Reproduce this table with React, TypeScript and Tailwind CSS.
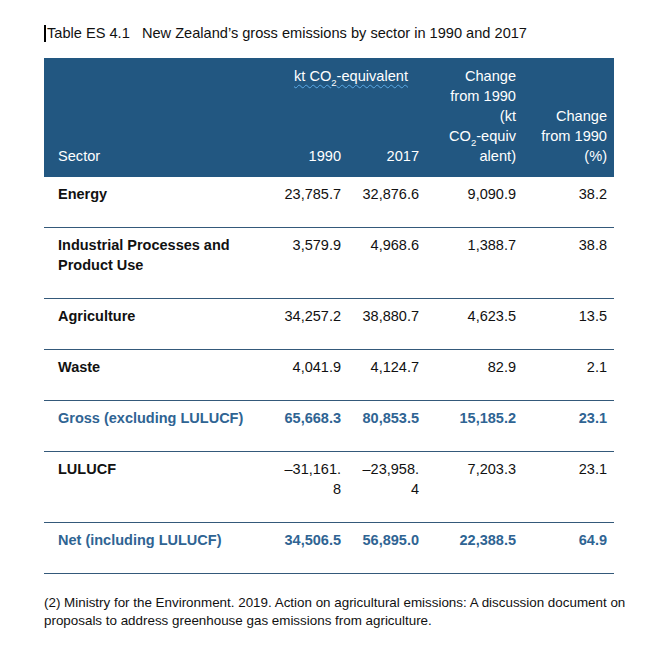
import React from "react";

const cols = "grid grid-cols-[206px_98px_78px_97px_91px]";

type Row = {
  sector: React.ReactNode;
  v1: React.ReactNode;
  v2: React.ReactNode;
  ch: string;
  pct: string;
  total?: boolean;
};

const rows: Row[] = [
  { sector: "Energy", v1: "23,785.7", v2: "32,876.6", ch: "9,090.9", pct: "38.2" },
  {
    sector: (
      <>
        Industrial Processes and
        <br />
        Product Use
      </>
    ),
    v1: "3,579.9",
    v2: "4,968.6",
    ch: "1,388.7",
    pct: "38.8",
  },
  { sector: "Agriculture", v1: "34,257.2", v2: "38,880.7", ch: "4,623.5", pct: "13.5" },
  { sector: "Waste", v1: "4,041.9", v2: "4,124.7", ch: "82.9", pct: "2.1" },
  { sector: "Gross (excluding LULUCF)", v1: "65,668.3", v2: "80,853.5", ch: "15,185.2", pct: "23.1", total: true },
  {
    sector: "LULUCF",
    v1: (
      <>
        –31,161.
        <br />8
      </>
    ),
    v2: (
      <>
        –23,958.
        <br />4
      </>
    ),
    ch: "7,203.3",
    pct: "23.1",
  },
  { sector: "Net (including LULUCF)", v1: "34,506.5", v2: "56,895.0", ch: "22,388.5", pct: "64.9", total: true },
];

export default function App() {
  return (
    <div
      className="w-[667px] h-[645px] bg-white text-[#111] overflow-hidden"
      style={{ fontFamily: '"Liberation Sans", Arial, sans-serif' }}
    >
      <div className="pl-[44px] pt-[24px]">
        <div className="flex items-center h-[18px]">
          <span className="w-[2px] h-[17px] bg-black mr-[1px]" />
          <span className="text-[14.6px] leading-[18px] whitespace-pre">
            {"Table ES 4.1   New Zealand’s gross emissions by sector in 1990 and 2017"}
          </span>
        </div>

        <div className="mt-[16px] w-[570px]">
          {/* header */}
          <div className={`${cols} bg-[#225781] text-white text-[14.6px] leading-[20px] pt-[8px] pb-[11px] h-[119px]`}>
            <div className="flex items-end pl-[14px]">Sector</div>
            <div className="col-span-2 flex flex-col justify-between">
              <div className="pl-[44px]">
                <span className="underline decoration-wavy decoration-[#5aa9e6] decoration-[1px] underline-offset-[3px]">
                  kt CO<sub className="text-[9.5px] leading-none align-[-3px]">2</sub>-equivalent
                </span>
              </div>
              <div className="grid grid-cols-[98px_78px]">
                <div className="text-right pr-[7px]">1990</div>
                <div className="text-right pr-[7px]">2017</div>
              </div>
            </div>
            <div className="text-right pr-[7px]">
              Change
              <br />
              from 1990
              <br />
              (kt
              <br />
              CO<sub className="text-[9.5px] leading-none align-[-3px]">2</sub>-equiv
              <br />
              alent)
            </div>
            <div className="flex flex-col justify-end text-right pr-[7px]">
              <div>
                Change
                <br />
                from 1990
                <br />
                (%)
              </div>
            </div>
          </div>

          {/* body */}
          {rows.map((r, i) => (
            <div
              key={i}
              className={`${cols} text-[14.5px] leading-[20px] pt-[7px] pb-[23px] border-b border-[#34597a] ${
                r.total ? "font-bold text-[#2f6493]" : "text-[#111]"
              }`}
            >
              <div className="pl-[14px] font-bold">{r.sector}</div>
              <div className="text-right pr-[7px]">{r.v1}</div>
              <div className="text-right pr-[7px]">{r.v2}</div>
              <div className="text-right pr-[7px]">{r.ch}</div>
              <div className="text-right pr-[7px]">{r.pct}</div>
            </div>
          ))}
        </div>

        <p className="mt-[20px] text-[13.4px] leading-[18px] text-[#111] w-[600px]">
          (2) Ministry for the Environment. 2019. Action on agricultural emissions: A discussion document on
          <br />
          proposals to address greenhouse gas emissions from agriculture.
        </p>
      </div>
    </div>
  );
}
